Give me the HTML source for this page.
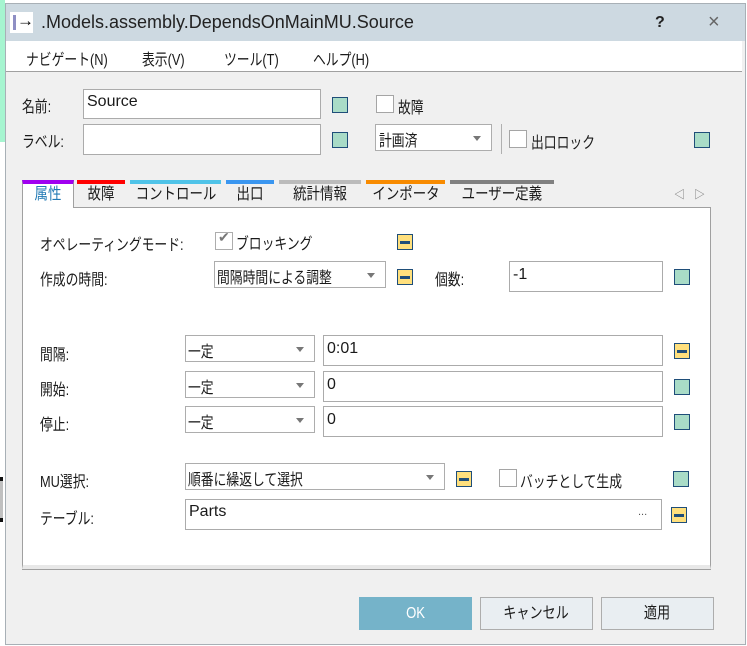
<!DOCTYPE html>
<html><head><meta charset="utf-8"><style>
*{box-sizing:border-box;margin:0;padding:0}
body{width:747px;height:646px;position:relative;overflow:hidden;background:#fff;font-family:"Liberation Sans","Noto Sans CJK JP",sans-serif;font-size:16px;color:#1a1a1a}
.a{position:absolute;white-space:nowrap}
.n{transform:scaleX(0.8);transform-origin:left center}
.win{position:absolute;left:5px;top:3px;width:741px;height:642px;border:1px solid #a8b0b6;background:#f0f0f0}
.inp{position:absolute;background:#fff;border:1px solid #ababab}
.cb{position:absolute;background:#fff;border:1px solid #adadad}
.cb:after{content:"";position:absolute;right:10px;top:50%;margin-top:-2px;border-left:4px solid transparent;border-right:4px solid transparent;border-top:5px solid #777}
.chk{position:absolute;width:18px;height:18px;background:#fff;border:1px solid #a5a5a5}
.g{position:absolute;width:16px;height:16px;background:#a9dcc7;border:1.5px solid #1f4e79}
.y{position:absolute;width:16px;height:16px;background:#ffe07d;border:1.5px solid #1f4e79}
.y:after{content:"";position:absolute;left:2px;right:2px;top:5.5px;height:3px;background:#1f4e79}
.tab{position:absolute;top:180px;height:27px;border-top:4px solid;text-align:center;font-size:16px;line-height:22px;white-space:nowrap;display:flex;justify-content:center}
.tab span{display:inline-block;transform:scaleX(0.84);white-space:nowrap;flex:none}
.btn{position:absolute;top:597px;width:113px;height:33px;border:1px solid #adadad;background:#e9eef2;text-align:center;line-height:31px;font-size:16px}
.btn span{display:inline-block;transform:scaleX(0.82)}
</style></head><body>
<div class="a" style="left:0;top:0;width:5px;height:142px;background:#a6f5d0"></div>
<div class="a" style="left:0;top:477px;width:3px;height:4px;background:#111"></div>
<div class="a" style="left:0;top:481px;width:3px;height:37px;background:#c0c0c0"></div>
<div class="a" style="left:0;top:518px;width:3px;height:4px;background:#111"></div>
<div class="win"></div>
<div class="a" style="left:6px;top:4px;width:739px;height:37px;background:#cdd9e1"></div>
<div class="a" style="left:10px;top:12px;width:23px;height:21px;background:#fff"></div>
<div class="a" style="left:13px;top:15px;width:3px;height:15px;background:#8f8fc4"></div>
<div class="a" style="left:17px;top:11px;font-size:17px;font-weight:bold;color:#000">→</div>
<div class="a" style="left:41px;top:12px;font-size:18px;color:#222">.Models.assembly.DependsOnMainMU.Source</div>
<div class="a" style="left:655px;top:14px;font-size:16px;font-weight:bold;color:#222">?</div>
<div class="a" style="left:708px;top:11px;font-size:20px;color:#666">×</div>
<div class="a" style="left:6px;top:41px;width:736px;height:31px;background:#fff;border-bottom:1px solid #a0a0a0"></div>
<div class="a n" style="left:26px;top:46px">ナビゲート(N)</div>
<div class="a n" style="left:142px;top:46px">表示(V)</div>
<div class="a n" style="left:224px;top:46px">ツール(T)</div>
<div class="a n" style="left:313px;top:46px">ヘルプ(H)</div>

<div class="a n" style="left:22px;top:93px">名前:</div>
<div class="inp" style="left:83px;top:89px;width:238px;height:30px"></div>
<div class="a" style="left:87px;top:93px;font-size:16px">Source</div>
<div class="a n" style="left:22px;top:128px">ラベル:</div>
<div class="inp" style="left:83px;top:124px;width:238px;height:31px"></div>
<div class="g" style="left:332px;top:97px"></div>
<div class="g" style="left:332px;top:132px"></div>
<div class="chk" style="left:376px;top:95px"></div>
<div class="a n" style="left:398px;top:94px">故障</div>
<div class="cb" style="left:375px;top:124px;width:117px;height:27px"></div>
<div class="a n" style="left:379px;top:127px">計画済</div>
<div class="a" style="left:501px;top:124px;width:1px;height:30px;background:#b0b0b0"></div>
<div class="chk" style="left:509px;top:130px"></div>
<div class="a n" style="left:531px;top:129px">出口ロック</div>
<div class="g" style="left:694px;top:132px"></div>

<div class="a" style="left:22px;top:207px;width:689px;height:362px;background:#fff;border:1px solid #a0a0a0;border-bottom:4px solid #e8e8e8;box-shadow:0 1px 0 #a0a0a0"></div>
<div class="tab" style="left:22px;width:52px;border-color:#a000f0;background:#fff;height:28px;border-left:1px solid #a0a0a0;border-right:1px solid #a0a0a0;color:#1f78b4"><span>属性</span></div>
<div class="tab" style="left:77px;width:48px;border-color:#f00"><span>故障</span></div>
<div class="tab" style="left:130px;width:91px;border-color:#4fc3e8"><span>コントロール</span></div>
<div class="tab" style="left:226px;width:48px;border-color:#3a96f0"><span>出口</span></div>
<div class="tab" style="left:279px;width:82px;border-color:#bbb"><span>統計情報</span></div>
<div class="tab" style="left:366px;width:79px;border-color:#f88b00"><span>インポータ</span></div>
<div class="tab" style="left:450px;width:104px;border-color:#808080"><span>ユーザー定義</span></div>
<div class="a" style="left:674px;top:186px;font-size:11px;color:#777">◁</div>
<div class="a" style="left:694px;top:186px;font-size:11px;color:#777">▷</div>

<div class="a n" style="left:40px;top:231px">オペレーティングモード:</div>
<div class="chk" style="left:215px;top:232px;border-color:#adadad"></div>
<div class="a" style="left:218px;top:229px;font-size:14px;color:#777">✔</div>
<div class="a n" style="left:236px;top:230px">ブロッキング</div>
<div class="y" style="left:397px;top:234px"></div>
<div class="a n" style="left:40px;top:266px">作成の時間:</div>
<div class="cb" style="left:214px;top:261px;width:172px;height:27px"></div>
<div class="a n" style="left:217px;top:264px">間隔時間による調整</div>
<div class="y" style="left:397px;top:269px"></div>
<div class="a n" style="left:435px;top:266px">個数:</div>
<div class="inp" style="left:509px;top:261px;width:154px;height:31px"></div>
<div class="a" style="left:513px;top:266px;font-size:16px">-1</div>
<div class="g" style="left:674px;top:269px"></div>

<div class="a n" style="left:40px;top:341px">間隔:</div>
<div class="cb" style="left:185px;top:335px;width:130px;height:27px"></div>
<div class="a n" style="left:188px;top:338px">一定</div>
<div class="inp" style="left:323px;top:335px;width:340px;height:31px"></div>
<div class="a" style="left:327px;top:340px;font-size:16px">0:01</div>
<div class="y" style="left:674px;top:343px"></div>
<div class="a n" style="left:40px;top:376px">開始:</div>
<div class="cb" style="left:185px;top:371px;width:130px;height:27px"></div>
<div class="a n" style="left:188px;top:374px">一定</div>
<div class="inp" style="left:323px;top:371px;width:340px;height:31px"></div>
<div class="a" style="left:327px;top:376px;font-size:16px">0</div>
<div class="g" style="left:674px;top:379px"></div>
<div class="a n" style="left:40px;top:411px">停止:</div>
<div class="cb" style="left:185px;top:406px;width:130px;height:27px"></div>
<div class="a n" style="left:188px;top:409px">一定</div>
<div class="inp" style="left:323px;top:406px;width:340px;height:31px"></div>
<div class="a" style="left:327px;top:411px;font-size:16px">0</div>
<div class="g" style="left:674px;top:414px"></div>

<div class="a n" style="left:40px;top:468px">MU選択:</div>
<div class="cb" style="left:185px;top:463px;width:260px;height:27px"></div>
<div class="a n" style="left:188px;top:466px">順番に繰返して選択</div>
<div class="y" style="left:456px;top:471px"></div>
<div class="chk" style="left:499px;top:469px"></div>
<div class="a n" style="left:520px;top:468px">バッチとして生成</div>
<div class="g" style="left:673px;top:471px"></div>
<div class="a n" style="left:40px;top:505px">テーブル:</div>
<div class="inp" style="left:185px;top:499px;width:477px;height:31px"></div>
<div class="a" style="left:189px;top:503px;font-size:16px">Parts</div>
<div class="a" style="left:638px;top:506px;font-size:11px;color:#555">...</div>
<div class="y" style="left:671px;top:507px"></div>

<div class="btn" style="left:359px;background:#75b3c9;border-color:#75b3c9;color:#fff"><span>OK</span></div>
<div class="btn" style="left:480px"><span>キャンセル</span></div>
<div class="btn" style="left:601px"><span>適用</span></div>
</body></html>
